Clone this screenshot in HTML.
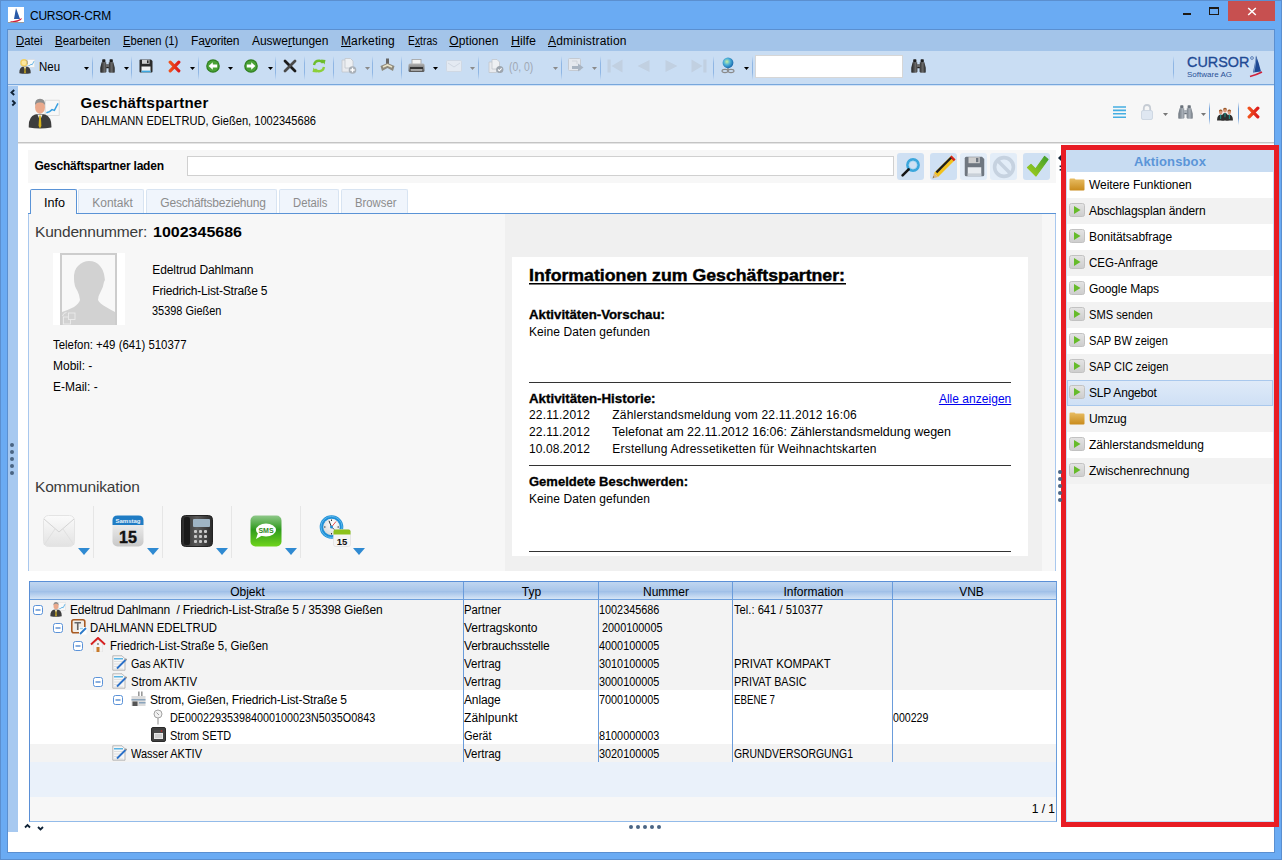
<!DOCTYPE html>
<html><head><meta charset="utf-8"><style>
html,body{margin:0;padding:0;width:1282px;height:860px;overflow:hidden;background:#6aabf3;}
.a{position:absolute;}
.t{white-space:pre;}
u{text-decoration:underline;text-underline-offset:1px}
</style></head><body>
<div class="a" style="left:0px;top:0px;width:1282px;height:860px;background:#6aabf3;box-shadow:inset 0 0 0 1px #5b8fcf;"></div>
<svg class="a" style="left:8px;top:7px" width="16" height="16" viewBox="0 0 16 16"><rect x="0" y="0" width="16" height="16" fill="#fff"/><path d="M8 1 L12 12 L6 12 Z" fill="#2a5aa8"/><path d="M2 14 Q8 15 14 11 L13 13 Q8 16 3 15Z" fill="#d0203a"/><rect x="0" y="15" width="16" height="1" fill="#9a9a9a"/></svg>
<div class="a t" style="left:30.00px;top:8.84px;line-height:14px;font-family:'Liberation Sans';font-size:12px;font-weight:normal;white-space:pre;letter-spacing:-0.233px;color:#000;">CURSOR-CRM</div>
<div class="a" style="left:1183px;top:13px;width:8px;height:2px;background:#1e1a16"></div>
<div class="a" style="left:1209px;top:7px;width:10px;height:8px;border:1px solid #1e1a16;border-top-width:2px;box-sizing:border-box"></div>
<div class="a" style="left:1228px;top:1px;width:47px;height:20px;background:#c75050"></div>
<svg class="a" style="left:1247px;top:7px" width="10" height="9" viewBox="0 0 10 9"><path d="M1.2 1 L8.8 8 M8.8 1 L1.2 8" stroke="#fff" stroke-width="1.5"/></svg>
<div class="a" style="left:7px;top:29px;width:1268px;height:824px;background:#fff;border:1px solid #5a8fd0;box-sizing:border-box"></div>
<div class="a" style="left:8px;top:30px;width:1266px;height:21px;background:#a3c4e9"></div>
<div class="a t" style="left:16.00px;top:33.84px;line-height:14px;font-family:'Liberation Sans';font-size:12px;font-weight:normal;white-space:pre;letter-spacing:0.000px;color:#000;transform:scaleX(0.9459);transform-origin:0 0;"><u>D</u>atei</div>
<div class="a t" style="left:55.00px;top:33.84px;line-height:14px;font-family:'Liberation Sans';font-size:12px;font-weight:normal;white-space:pre;letter-spacing:0.000px;color:#000;transform:scaleX(0.9527);transform-origin:0 0;"><u>B</u>earbeiten</div>
<div class="a t" style="left:123.00px;top:33.84px;line-height:14px;font-family:'Liberation Sans';font-size:12px;font-weight:normal;white-space:pre;letter-spacing:0.000px;color:#000;transform:scaleX(0.9314);transform-origin:0 0;"><u>E</u>benen (1)</div>
<div class="a t" style="left:191.00px;top:33.84px;line-height:14px;font-family:'Liberation Sans';font-size:12px;font-weight:normal;white-space:pre;letter-spacing:-0.192px;color:#000;">Fa<u>v</u>oriten</div>
<div class="a t" style="left:252.00px;top:33.84px;line-height:14px;font-family:'Liberation Sans';font-size:12px;font-weight:normal;white-space:pre;letter-spacing:-0.027px;color:#000;">Auswe<u>r</u>tungen</div>
<div class="a t" style="left:341.00px;top:33.84px;line-height:14px;font-family:'Liberation Sans';font-size:12px;font-weight:normal;white-space:pre;letter-spacing:0.113px;color:#000;"><u>M</u>arketing</div>
<div class="a t" style="left:407.50px;top:33.84px;line-height:14px;font-family:'Liberation Sans';font-size:12px;font-weight:normal;white-space:pre;letter-spacing:0.000px;color:#000;transform:scaleX(0.8614);transform-origin:0 0;">E<u>x</u>tras</div>
<div class="a t" style="left:449.30px;top:33.84px;line-height:14px;font-family:'Liberation Sans';font-size:12px;font-weight:normal;white-space:pre;letter-spacing:0.075px;color:#000;"><u>O</u>ptionen</div>
<div class="a t" style="left:511.00px;top:33.84px;line-height:14px;font-family:'Liberation Sans';font-size:12px;font-weight:normal;white-space:pre;letter-spacing:0.000px;color:#000;transform:scaleX(1.0410);transform-origin:0 0;"><u>H</u>ilfe</div>
<div class="a t" style="left:548.00px;top:33.84px;line-height:14px;font-family:'Liberation Sans';font-size:12px;font-weight:normal;white-space:pre;letter-spacing:0.183px;color:#000;"><u>A</u>dministration</div>
<div class="a" style="left:8px;top:51px;width:1266px;height:33px;background:#c9ddf3"></div>
<div class="a" style="left:8px;top:84px;width:1266px;height:1px;background:#78a7dc"></div>
<div class="a" style="left:8px;top:85px;width:1266px;height:1px;background:#d2e3f6"></div>
<div class="a" style="left:92px;top:56px;width:1px;height:24px;background:linear-gradient(#c9ddf3,#8fb6e4 30%,#8fb6e4 70%,#c9ddf3)"></div>
<div class="a" style="left:131px;top:56px;width:1px;height:24px;background:linear-gradient(#c9ddf3,#8fb6e4 30%,#8fb6e4 70%,#c9ddf3)"></div>
<div class="a" style="left:198px;top:56px;width:1px;height:24px;background:linear-gradient(#c9ddf3,#8fb6e4 30%,#8fb6e4 70%,#c9ddf3)"></div>
<div class="a" style="left:275px;top:56px;width:1px;height:24px;background:linear-gradient(#c9ddf3,#8fb6e4 30%,#8fb6e4 70%,#c9ddf3)"></div>
<div class="a" style="left:304px;top:56px;width:1px;height:24px;background:linear-gradient(#c9ddf3,#8fb6e4 30%,#8fb6e4 70%,#c9ddf3)"></div>
<div class="a" style="left:333px;top:56px;width:1px;height:24px;background:linear-gradient(#c9ddf3,#8fb6e4 30%,#8fb6e4 70%,#c9ddf3)"></div>
<div class="a" style="left:372px;top:56px;width:1px;height:24px;background:linear-gradient(#c9ddf3,#8fb6e4 30%,#8fb6e4 70%,#c9ddf3)"></div>
<div class="a" style="left:401px;top:56px;width:1px;height:24px;background:linear-gradient(#c9ddf3,#8fb6e4 30%,#8fb6e4 70%,#c9ddf3)"></div>
<div class="a" style="left:478px;top:56px;width:1px;height:24px;background:linear-gradient(#c9ddf3,#8fb6e4 30%,#8fb6e4 70%,#c9ddf3)"></div>
<div class="a" style="left:561px;top:56px;width:1px;height:24px;background:linear-gradient(#c9ddf3,#8fb6e4 30%,#8fb6e4 70%,#c9ddf3)"></div>
<div class="a" style="left:600px;top:56px;width:1px;height:24px;background:linear-gradient(#c9ddf3,#8fb6e4 30%,#8fb6e4 70%,#c9ddf3)"></div>
<div class="a" style="left:713px;top:56px;width:1px;height:24px;background:linear-gradient(#c9ddf3,#8fb6e4 30%,#8fb6e4 70%,#c9ddf3)"></div>
<div class="a" style="left:752px;top:56px;width:1px;height:24px;background:linear-gradient(#c9ddf3,#8fb6e4 30%,#8fb6e4 70%,#c9ddf3)"></div>
<div class="a" style="left:1173px;top:56px;width:1px;height:24px;background:linear-gradient(#c9ddf3,#8fb6e4 30%,#8fb6e4 70%,#c9ddf3)"></div>
<svg class="a" style="left:84px;top:67px" width="5" height="3" viewBox="0 0 5 3"><path d="M0 0 H5 L2.5 3Z" fill="#000"/></svg>
<svg class="a" style="left:124px;top:67px" width="5" height="3" viewBox="0 0 5 3"><path d="M0 0 H5 L2.5 3Z" fill="#000"/></svg>
<svg class="a" style="left:190px;top:67px" width="5" height="3" viewBox="0 0 5 3"><path d="M0 0 H5 L2.5 3Z" fill="#000"/></svg>
<svg class="a" style="left:228px;top:67px" width="5" height="3" viewBox="0 0 5 3"><path d="M0 0 H5 L2.5 3Z" fill="#000"/></svg>
<svg class="a" style="left:268px;top:67px" width="5" height="3" viewBox="0 0 5 3"><path d="M0 0 H5 L2.5 3Z" fill="#000"/></svg>
<svg class="a" style="left:433px;top:67px" width="5" height="3" viewBox="0 0 5 3"><path d="M0 0 H5 L2.5 3Z" fill="#000"/></svg>
<svg class="a" style="left:744px;top:67px" width="5" height="3" viewBox="0 0 5 3"><path d="M0 0 H5 L2.5 3Z" fill="#000"/></svg>
<svg class="a" style="left:365px;top:67px" width="5" height="3" viewBox="0 0 5 3"><path d="M0 0 H5 L2.5 3Z" fill="#8a8a8a"/></svg>
<svg class="a" style="left:470px;top:67px" width="5" height="3" viewBox="0 0 5 3"><path d="M0 0 H5 L2.5 3Z" fill="#8a8a8a"/></svg>
<svg class="a" style="left:553px;top:67px" width="5" height="3" viewBox="0 0 5 3"><path d="M0 0 H5 L2.5 3Z" fill="#8a8a8a"/></svg>
<svg class="a" style="left:592px;top:67px" width="5" height="3" viewBox="0 0 5 3"><path d="M0 0 H5 L2.5 3Z" fill="#8a8a8a"/></svg>
<div class="a t" style="left:39.00px;top:59.84px;line-height:14px;font-family:'Liberation Sans';font-size:12px;font-weight:normal;white-space:pre;letter-spacing:0.000px;color:#000;transform:scaleX(0.9539);transform-origin:0 0;">Neu</div>
<div class="a t" style="left:508.70px;top:59.84px;line-height:14px;font-family:'Liberation Sans';font-size:12px;font-weight:normal;white-space:pre;letter-spacing:0.000px;color:#a0a8b4;transform:scaleX(0.8674);transform-origin:0 0;">(0, 0)</div>
<div class="a" style="left:755px;top:55px;width:148px;height:23px;background:#fff;border:1px solid #d6d6d6;box-sizing:border-box"></div>
<div class="a t" style="left:1186.80px;top:52.63px;line-height:18px;font-family:'Liberation Sans';font-size:15.5px;font-weight:normal;white-space:pre;letter-spacing:0.000px;color:#1f4a94;transform:scaleX(0.9290);transform-origin:0 0;-webkit-text-stroke:0.35px #1f4a94;">CURSOR</div>
<div class="a t" style="left:1187.00px;top:69.73px;line-height:9px;font-family:'Liberation Sans';font-size:8px;font-weight:normal;white-space:pre;letter-spacing:0.007px;color:#2a5298;">Software AG</div>
<svg class="a" style="left:1250px;top:56px" width="4" height="4" viewBox="0 0 4 4"><circle cx="2" cy="2" r="1.4" fill="none" stroke="#1f4a94" stroke-width="0.6"/></svg>
<svg class="a" style="left:1249px;top:55px" width="14" height="23" viewBox="0 0 14 23"><path d="M7 0.5 Q10 8 12 16.5 L4 17.5 Q6 9 7 0.5Z" fill="#1f4a94"/><path d="M7 3 Q6.5 10 5 17" stroke="#c8dcf2" stroke-width="0.5" fill="none"/><path d="M1 21.5 Q7 20 13 17" stroke="#d0203a" stroke-width="1.6" fill="none"/></svg>
<div class="a" style="left:8px;top:86px;width:10px;height:746px;background:#a7c9f0"></div>
<div class="a" style="left:18px;top:86px;width:1256px;height:56px;background:#f7f7f7"></div>
<div class="a" style="left:18px;top:142px;width:1256px;height:1px;background:#c4c4c4"></div>
<div class="a" style="left:18px;top:143px;width:1256px;height:1px;background:#e4e4e4"></div>
<div class="a t" style="left:80.50px;top:94.30px;line-height:17px;font-family:'Liberation Sans';font-size:15px;font-weight:bold;white-space:pre;letter-spacing:0.236px;color:#000;">Geschäftspartner</div>
<div class="a t" style="left:80.50px;top:113.84px;line-height:14px;font-family:'Liberation Sans';font-size:12px;font-weight:normal;white-space:pre;letter-spacing:0.000px;color:#000;transform:scaleX(0.9256);transform-origin:0 0;">DAHLMANN EDELTRUD, Gießen, 1002345686</div>
<div class="a" style="left:28px;top:150px;width:1028px;height:33px;background:#f7f7f7"></div>
<div class="a t" style="left:34.40px;top:158.84px;line-height:14px;font-family:'Liberation Sans';font-size:12px;font-weight:bold;white-space:pre;letter-spacing:-0.211px;color:#000;">Geschäftspartner laden</div>
<div class="a" style="left:187px;top:156px;width:707px;height:20px;background:#fff;border:1px solid #d0d0d0;box-sizing:border-box"></div>
<div class="a" style="left:897px;top:153px;width:27px;height:27px;background:#cfe0f3;border-radius:3px"></div>
<div class="a" style="left:930px;top:153px;width:27px;height:27px;background:#cfe0f3;border-radius:3px"></div>
<div class="a" style="left:960px;top:153px;width:27px;height:27px;background:#e3edf8;border-radius:3px"></div>
<div class="a" style="left:990px;top:153px;width:27px;height:27px;background:#e3edf8;border-radius:3px"></div>
<div class="a" style="left:1023px;top:153px;width:27px;height:27px;background:#cfe0f3;border-radius:3px"></div>
<div class="a" style="left:28px;top:213px;width:1028px;height:1px;background:#5a93d6"></div>
<div class="a" style="left:78px;top:189px;width:66px;height:24px;background:#f0f5fc;border:1px solid #d8e4f2;border-bottom:none;box-sizing:border-box;border-radius:2px 2px 0 0"></div>
<div class="a t" style="left:92.30px;top:195.84px;line-height:14px;font-family:'Liberation Sans';font-size:12px;font-weight:normal;white-space:pre;letter-spacing:-0.043px;color:#8c8c8c;">Kontakt</div>
<div class="a" style="left:146px;top:189px;width:131px;height:24px;background:#f0f5fc;border:1px solid #d8e4f2;border-bottom:none;box-sizing:border-box;border-radius:2px 2px 0 0"></div>
<div class="a t" style="left:160.35px;top:195.84px;line-height:14px;font-family:'Liberation Sans';font-size:12px;font-weight:normal;white-space:pre;letter-spacing:-0.228px;color:#8c8c8c;">Geschäftsbeziehung</div>
<div class="a" style="left:279px;top:189px;width:60px;height:24px;background:#f0f5fc;border:1px solid #d8e4f2;border-bottom:none;box-sizing:border-box;border-radius:2px 2px 0 0"></div>
<div class="a t" style="left:293.35px;top:195.84px;line-height:14px;font-family:'Liberation Sans';font-size:12px;font-weight:normal;white-space:pre;letter-spacing:0.000px;color:#8c8c8c;transform:scaleX(0.9404);transform-origin:0 0;">Details</div>
<div class="a" style="left:341px;top:189px;width:67px;height:24px;background:#f0f5fc;border:1px solid #d8e4f2;border-bottom:none;box-sizing:border-box;border-radius:2px 2px 0 0"></div>
<div class="a t" style="left:355.35px;top:195.84px;line-height:14px;font-family:'Liberation Sans';font-size:12px;font-weight:normal;white-space:pre;letter-spacing:0.000px;color:#8c8c8c;transform:scaleX(0.9428);transform-origin:0 0;">Browser</div>
<div class="a" style="left:30px;top:189px;width:47px;height:26px;background:#f7f7f7;border:1px solid #5a93d6;border-bottom:none;box-sizing:border-box;border-radius:2px 2px 0 0"></div>
<div class="a t" style="left:43.50px;top:195.84px;line-height:14px;font-family:'Liberation Sans';font-size:12px;font-weight:normal;white-space:pre;letter-spacing:0.000px;color:#000;transform:scaleX(1.0492);transform-origin:0 0;">Info</div>
<div class="a" style="left:28px;top:214px;width:1028px;height:357px;background:#f7f7f7"></div>
<div class="a" style="left:28px;top:214px;width:1px;height:357px;background:#a9c8ee"></div>
<div class="a" style="left:1055px;top:214px;width:1px;height:357px;background:#a9c8ee"></div>
<div class="a" style="left:505px;top:214px;width:537px;height:357px;background:#f0f0f0"></div>
<div class="a" style="left:512px;top:257px;width:516px;height:299px;background:#fff"></div>
<div class="a t" style="left:35.00px;top:222.63px;line-height:18px;font-family:'Liberation Sans';font-size:15.5px;font-weight:normal;white-space:pre;letter-spacing:-0.200px;color:#3a3a3a;">Kundennummer:</div>
<div class="a t" style="left:153.00px;top:223.30px;line-height:17px;font-family:'Liberation Sans';font-size:15px;font-weight:bold;white-space:pre;letter-spacing:0.000px;color:#000;transform:scaleX(1.0667);transform-origin:0 0;">1002345686</div>
<div class="a t" style="left:152.30px;top:262.84px;line-height:14px;font-family:'Liberation Sans';font-size:12px;font-weight:normal;white-space:pre;letter-spacing:-0.102px;color:#000;">Edeltrud Dahlmann</div>
<div class="a t" style="left:152.30px;top:283.84px;line-height:14px;font-family:'Liberation Sans';font-size:12px;font-weight:normal;white-space:pre;letter-spacing:-0.190px;color:#000;">Friedrich-List-Straße 5</div>
<div class="a t" style="left:152.30px;top:303.84px;line-height:14px;font-family:'Liberation Sans';font-size:12px;font-weight:normal;white-space:pre;letter-spacing:0.000px;color:#000;transform:scaleX(0.9124);transform-origin:0 0;">35398 Gießen</div>
<div class="a t" style="left:53.00px;top:337.84px;line-height:14px;font-family:'Liberation Sans';font-size:12px;font-weight:normal;white-space:pre;letter-spacing:0.000px;color:#000;transform:scaleX(0.9505);transform-origin:0 0;">Telefon: +49 (641) 510377</div>
<div class="a t" style="left:53.00px;top:358.84px;line-height:14px;font-family:'Liberation Sans';font-size:12px;font-weight:normal;white-space:pre;letter-spacing:0.000px;color:#000;">Mobil: -</div>
<div class="a t" style="left:53.00px;top:379.84px;line-height:14px;font-family:'Liberation Sans';font-size:12px;font-weight:normal;white-space:pre;letter-spacing:0.000px;color:#000;">E-Mail: -</div>
<div class="a t" style="left:35.00px;top:477.63px;line-height:18px;font-family:'Liberation Sans';font-size:15.5px;font-weight:normal;white-space:pre;letter-spacing:-0.171px;color:#3a3a3a;">Kommunikation</div>
<div class="a" style="left:53px;top:253px;width:72px;height:72px;background:#fff"></div>
<div class="a t" style="left:529.30px;top:266.11px;line-height:20px;font-family:'Liberation Sans';font-size:17px;font-weight:bold;white-space:pre;letter-spacing:0.000px;color:#000;transform:scaleX(1.0422);transform-origin:0 0;-webkit-text-stroke:0.45px #000;">Informationen zum Geschäftspartner:</div>
<div class="a" style="left:529px;top:283px;width:317px;height:1px;background:#000"></div>
<div class="a" style="left:529px;top:284px;width:317px;height:1px;background:#777"></div>
<div class="a t" style="left:529.00px;top:307.84px;line-height:14px;font-family:'Liberation Sans';font-size:12px;font-weight:bold;white-space:pre;letter-spacing:0.000px;color:#000;transform:scaleX(1.1044);transform-origin:0 0;-webkit-text-stroke:0.3px #000;">Aktivitäten-Vorschau:</div>
<div class="a t" style="left:529.00px;top:324.84px;line-height:14px;font-family:'Liberation Sans';font-size:12px;font-weight:normal;white-space:pre;letter-spacing:0.078px;color:#000;">Keine Daten gefunden</div>
<div class="a" style="left:529px;top:382px;width:482px;height:1px;background:#333"></div>
<div class="a t" style="left:529.00px;top:391.84px;line-height:14px;font-family:'Liberation Sans';font-size:12px;font-weight:bold;white-space:pre;letter-spacing:0.000px;color:#000;transform:scaleX(1.1093);transform-origin:0 0;-webkit-text-stroke:0.3px #000;">Aktivitäten-Historie:</div>
<div class="a t" style="left:938.90px;top:391.84px;line-height:14px;font-family:'Liberation Sans';font-size:12px;font-weight:normal;white-space:pre;letter-spacing:0.026px;color:#0000ee;text-decoration:underline;">Alle anzeigen</div>
<div class="a t" style="left:529.00px;top:407.84px;line-height:14px;font-family:'Liberation Sans';font-size:12px;font-weight:normal;white-space:pre;letter-spacing:0.183px;color:#000;">22.11.2012</div>
<div class="a t" style="left:612.30px;top:407.84px;line-height:14px;font-family:'Liberation Sans';font-size:12px;font-weight:normal;white-space:pre;letter-spacing:0.185px;color:#000;">Zählerstandsmeldung vom 22.11.2012 16:06</div>
<div class="a t" style="left:529.00px;top:424.84px;line-height:14px;font-family:'Liberation Sans';font-size:12px;font-weight:normal;white-space:pre;letter-spacing:0.183px;color:#000;">22.11.2012</div>
<div class="a t" style="left:612.30px;top:424.84px;line-height:14px;font-family:'Liberation Sans';font-size:12px;font-weight:normal;white-space:pre;letter-spacing:0.000px;color:#000;transform:scaleX(1.0420);transform-origin:0 0;">Telefonat am 22.11.2012 16:06: Zählerstandsmeldung wegen</div>
<div class="a t" style="left:529.00px;top:441.84px;line-height:14px;font-family:'Liberation Sans';font-size:12px;font-weight:normal;white-space:pre;letter-spacing:0.094px;color:#000;">10.08.2012</div>
<div class="a t" style="left:612.30px;top:441.84px;line-height:14px;font-family:'Liberation Sans';font-size:12px;font-weight:normal;white-space:pre;letter-spacing:0.193px;color:#000;">Erstellung Adressetiketten für Weihnachtskarten</div>
<div class="a" style="left:529px;top:465px;width:482px;height:1px;background:#333"></div>
<div class="a t" style="left:529.00px;top:474.84px;line-height:14px;font-family:'Liberation Sans';font-size:12px;font-weight:bold;white-space:pre;letter-spacing:0.000px;color:#000;transform:scaleX(1.0837);transform-origin:0 0;-webkit-text-stroke:0.3px #000;">Gemeldete Beschwerden:</div>
<div class="a t" style="left:529.00px;top:491.84px;line-height:14px;font-family:'Liberation Sans';font-size:12px;font-weight:normal;white-space:pre;letter-spacing:0.078px;color:#000;">Keine Daten gefunden</div>
<div class="a" style="left:529px;top:551px;width:482px;height:1px;background:#333"></div>
<div class="a" style="left:29px;top:581px;width:1028px;height:241px;background:#f7f7f7;border:1px solid #5a8fd6;border-right-color:#6a9edd;border-bottom-color:#93bbe9;box-sizing:border-box"></div>
<div class="a" style="left:30px;top:582px;width:1026px;height:17px;background:linear-gradient(#c0d6f0,#a9c6ea 50%,#a0c0e8 56%,#d6e5f6)"></div>
<div class="a" style="left:30px;top:599px;width:1026px;height:1px;background:#6d9fdc"></div>
<div class="a" style="left:30px;top:600px;width:1026px;height:18px;background:#f3f3f3"></div>
<div class="a" style="left:30px;top:618px;width:1026px;height:18px;background:#f3f3f3"></div>
<div class="a" style="left:30px;top:636px;width:1026px;height:18px;background:#f3f3f3"></div>
<div class="a" style="left:30px;top:654px;width:1026px;height:18px;background:#f3f3f3"></div>
<div class="a" style="left:30px;top:672px;width:1026px;height:18px;background:#f3f3f3"></div>
<div class="a" style="left:30px;top:690px;width:1026px;height:18px;background:#fff"></div>
<div class="a" style="left:30px;top:708px;width:1026px;height:18px;background:#fff"></div>
<div class="a" style="left:30px;top:726px;width:1026px;height:18px;background:#fff"></div>
<div class="a" style="left:30px;top:744px;width:1026px;height:18px;background:#f3f3f3"></div>
<div class="a" style="left:30px;top:762px;width:1026px;height:35px;background:#eaf1fa"></div>
<div class="a" style="left:463px;top:582px;width:1px;height:180px;background:#6a9cdb"></div>
<div class="a" style="left:598px;top:582px;width:1px;height:180px;background:#6a9cdb"></div>
<div class="a" style="left:732px;top:582px;width:1px;height:180px;background:#6a9cdb"></div>
<div class="a" style="left:892px;top:582px;width:1px;height:180px;background:#6a9cdb"></div>
<div class="a t" style="left:230.16px;top:584.84px;line-height:14px;font-family:'Liberation Sans';font-size:12px;font-weight:normal;white-space:pre;letter-spacing:0.000px;color:#000;">Objekt</div>
<div class="a t" style="left:521.83px;top:584.84px;line-height:14px;font-family:'Liberation Sans';font-size:12px;font-weight:normal;white-space:pre;letter-spacing:0.000px;color:#000;">Typ</div>
<div class="a t" style="left:642.99px;top:584.84px;line-height:14px;font-family:'Liberation Sans';font-size:12px;font-weight:normal;white-space:pre;letter-spacing:0.000px;color:#000;">Nummer</div>
<div class="a t" style="left:783.48px;top:584.84px;line-height:14px;font-family:'Liberation Sans';font-size:12px;font-weight:normal;white-space:pre;letter-spacing:0.000px;color:#000;">Information</div>
<div class="a t" style="left:959.16px;top:584.84px;line-height:14px;font-family:'Liberation Sans';font-size:12px;font-weight:normal;white-space:pre;letter-spacing:0.000px;color:#000;">VNB</div>
<div class="a t" style="left:70.00px;top:602.84px;line-height:14px;font-family:'Liberation Sans';font-size:12px;font-weight:normal;white-space:pre;letter-spacing:-0.152px;color:#000;">Edeltrud Dahlmann  / Friedrich-List-Straße 5 / 35398 Gießen</div>
<div class="a t" style="left:464.00px;top:602.84px;line-height:14px;font-family:'Liberation Sans';font-size:12px;font-weight:normal;white-space:pre;letter-spacing:0.000px;color:#000;transform:scaleX(0.9401);transform-origin:0 0;">Partner</div>
<div class="a t" style="left:598.50px;top:602.84px;line-height:14px;font-family:'Liberation Sans';font-size:12px;font-weight:normal;white-space:pre;letter-spacing:0.000px;color:#000;transform:scaleX(0.9049);transform-origin:0 0;">1002345686</div>
<div class="a t" style="left:733.90px;top:602.84px;line-height:14px;font-family:'Liberation Sans';font-size:12px;font-weight:normal;white-space:pre;letter-spacing:0.000px;color:#000;transform:scaleX(0.9327);transform-origin:0 0;">Tel.: 641 / 510377</div>
<div class="a t" style="left:90.00px;top:620.84px;line-height:14px;font-family:'Liberation Sans';font-size:12px;font-weight:normal;white-space:pre;letter-spacing:0.000px;color:#000;transform:scaleX(0.9445);transform-origin:0 0;">DAHLMANN EDELTRUD</div>
<div class="a t" style="left:464.00px;top:620.84px;line-height:14px;font-family:'Liberation Sans';font-size:12px;font-weight:normal;white-space:pre;letter-spacing:-0.042px;color:#000;">Vertragskonto</div>
<div class="a t" style="left:598.50px;top:620.84px;line-height:14px;font-family:'Liberation Sans';font-size:12px;font-weight:normal;white-space:pre;letter-spacing:0.000px;color:#000;transform:scaleX(0.9061);transform-origin:0 0;"> 2000100005</div>
<div class="a t" style="left:110.30px;top:638.84px;line-height:14px;font-family:'Liberation Sans';font-size:12px;font-weight:normal;white-space:pre;letter-spacing:0.000px;color:#000;transform:scaleX(0.9565);transform-origin:0 0;">Friedrich-List-Straße 5, Gießen</div>
<div class="a t" style="left:464.00px;top:638.84px;line-height:14px;font-family:'Liberation Sans';font-size:12px;font-weight:normal;white-space:pre;letter-spacing:-0.201px;color:#000;">Verbrauchsstelle</div>
<div class="a t" style="left:598.50px;top:638.84px;line-height:14px;font-family:'Liberation Sans';font-size:12px;font-weight:normal;white-space:pre;letter-spacing:0.000px;color:#000;transform:scaleX(0.9049);transform-origin:0 0;">4000100005</div>
<div class="a t" style="left:130.60px;top:656.84px;line-height:14px;font-family:'Liberation Sans';font-size:12px;font-weight:normal;white-space:pre;letter-spacing:0.000px;color:#000;transform:scaleX(0.8946);transform-origin:0 0;">Gas AKTIV</div>
<div class="a t" style="left:464.00px;top:656.84px;line-height:14px;font-family:'Liberation Sans';font-size:12px;font-weight:normal;white-space:pre;letter-spacing:0.000px;color:#000;transform:scaleX(0.9560);transform-origin:0 0;">Vertrag</div>
<div class="a t" style="left:598.50px;top:656.84px;line-height:14px;font-family:'Liberation Sans';font-size:12px;font-weight:normal;white-space:pre;letter-spacing:0.000px;color:#000;transform:scaleX(0.9049);transform-origin:0 0;">3010100005</div>
<div class="a t" style="left:733.90px;top:656.84px;line-height:14px;font-family:'Liberation Sans';font-size:12px;font-weight:normal;white-space:pre;letter-spacing:0.000px;color:#000;transform:scaleX(0.9437);transform-origin:0 0;">PRIVAT KOMPAKT</div>
<div class="a t" style="left:130.60px;top:674.84px;line-height:14px;font-family:'Liberation Sans';font-size:12px;font-weight:normal;white-space:pre;letter-spacing:0.000px;color:#000;transform:scaleX(0.9530);transform-origin:0 0;">Strom AKTIV</div>
<div class="a t" style="left:464.00px;top:674.84px;line-height:14px;font-family:'Liberation Sans';font-size:12px;font-weight:normal;white-space:pre;letter-spacing:0.000px;color:#000;transform:scaleX(0.9560);transform-origin:0 0;">Vertrag</div>
<div class="a t" style="left:598.50px;top:674.84px;line-height:14px;font-family:'Liberation Sans';font-size:12px;font-weight:normal;white-space:pre;letter-spacing:0.000px;color:#000;transform:scaleX(0.9049);transform-origin:0 0;">3000100005</div>
<div class="a t" style="left:733.90px;top:674.84px;line-height:14px;font-family:'Liberation Sans';font-size:12px;font-weight:normal;white-space:pre;letter-spacing:0.000px;color:#000;transform:scaleX(0.8984);transform-origin:0 0;">PRIVAT BASIC</div>
<div class="a t" style="left:150.00px;top:692.84px;line-height:14px;font-family:'Liberation Sans';font-size:12px;font-weight:normal;white-space:pre;letter-spacing:-0.191px;color:#000;">Strom, Gießen, Friedrich-List-Straße 5</div>
<div class="a t" style="left:464.00px;top:692.84px;line-height:14px;font-family:'Liberation Sans';font-size:12px;font-weight:normal;white-space:pre;letter-spacing:-0.146px;color:#000;">Anlage</div>
<div class="a t" style="left:598.50px;top:692.84px;line-height:14px;font-family:'Liberation Sans';font-size:12px;font-weight:normal;white-space:pre;letter-spacing:0.000px;color:#000;transform:scaleX(0.9049);transform-origin:0 0;">7000100005</div>
<div class="a t" style="left:733.90px;top:692.84px;line-height:14px;font-family:'Liberation Sans';font-size:12px;font-weight:normal;white-space:pre;letter-spacing:0.000px;color:#000;transform:scaleX(0.8086);transform-origin:0 0;">EBENE 7</div>
<div class="a t" style="left:170.40px;top:710.84px;line-height:14px;font-family:'Liberation Sans';font-size:12px;font-weight:normal;white-space:pre;letter-spacing:0.000px;color:#000;transform:scaleX(0.8991);transform-origin:0 0;">DE000229353984000100023N5035O0843</div>
<div class="a t" style="left:464.00px;top:710.84px;line-height:14px;font-family:'Liberation Sans';font-size:12px;font-weight:normal;white-space:pre;letter-spacing:0.111px;color:#000;">Zählpunkt</div>
<div class="a t" style="left:893.40px;top:710.84px;line-height:14px;font-family:'Liberation Sans';font-size:12px;font-weight:normal;white-space:pre;letter-spacing:0.000px;color:#000;transform:scaleX(0.8815);transform-origin:0 0;">000229</div>
<div class="a t" style="left:170.40px;top:728.84px;line-height:14px;font-family:'Liberation Sans';font-size:12px;font-weight:normal;white-space:pre;letter-spacing:0.000px;color:#000;transform:scaleX(0.9088);transform-origin:0 0;">Strom SETD</div>
<div class="a t" style="left:464.00px;top:728.84px;line-height:14px;font-family:'Liberation Sans';font-size:12px;font-weight:normal;white-space:pre;letter-spacing:0.000px;color:#000;transform:scaleX(0.9162);transform-origin:0 0;">Gerät</div>
<div class="a t" style="left:598.50px;top:728.84px;line-height:14px;font-family:'Liberation Sans';font-size:12px;font-weight:normal;white-space:pre;letter-spacing:0.000px;color:#000;transform:scaleX(0.9049);transform-origin:0 0;">8100000003</div>
<div class="a t" style="left:130.60px;top:746.84px;line-height:14px;font-family:'Liberation Sans';font-size:12px;font-weight:normal;white-space:pre;letter-spacing:0.000px;color:#000;transform:scaleX(0.9152);transform-origin:0 0;">Wasser AKTIV</div>
<div class="a t" style="left:464.00px;top:746.84px;line-height:14px;font-family:'Liberation Sans';font-size:12px;font-weight:normal;white-space:pre;letter-spacing:0.000px;color:#000;transform:scaleX(0.9560);transform-origin:0 0;">Vertrag</div>
<div class="a t" style="left:598.50px;top:746.84px;line-height:14px;font-family:'Liberation Sans';font-size:12px;font-weight:normal;white-space:pre;letter-spacing:0.000px;color:#000;transform:scaleX(0.9049);transform-origin:0 0;">3020100005</div>
<div class="a t" style="left:733.90px;top:746.84px;line-height:14px;font-family:'Liberation Sans';font-size:12px;font-weight:normal;white-space:pre;letter-spacing:0.000px;color:#000;transform:scaleX(0.8663);transform-origin:0 0;">GRUNDVERSORGUNG1</div>
<div class="a t" style="left:1031.64px;top:801.84px;line-height:14px;font-family:'Liberation Sans';font-size:12px;font-weight:normal;white-space:pre;letter-spacing:0.000px;color:#000;">1 / 1</div>
<div class="a" style="left:1061px;top:145px;width:218px;height:682px;background:#e81c24"></div>
<div class="a" style="left:1066px;top:150px;width:208px;height:672px;background:#f7f7f7;box-shadow:inset 0 0 0 1px #c6def5"></div>
<div class="a" style="left:1067px;top:150px;width:206px;height:22px;background:#c8dcf2"></div>
<div class="a t" style="left:1134.00px;top:154.00px;line-height:15px;font-family:'Liberation Sans';font-size:13px;font-weight:bold;white-space:pre;letter-spacing:0.120px;color:#5b95d8;">Aktionsbox</div>
<div class="a" style="left:1067px;top:172px;width:206px;height:26px;background:#fff"></div>
<svg class="a" style="left:1069px;top:178px" width="16" height="13" viewBox="0 0 16 13"><defs><linearGradient id="fg" x1="0" y1="0" x2="0" y2="1"><stop offset="0" stop-color="#e8bd63"/><stop offset="1" stop-color="#c98b1c"/></linearGradient></defs><path d="M0.5 1.5 Q0.5 0.5 1.5 0.5 H5.5 L6.5 1.5 H14.5 Q15.5 1.5 15.5 2.5 V11.5 Q15.5 12.5 14.5 12.5 H1.5 Q0.5 12.5 0.5 11.5Z" fill="url(#fg)"/></svg>
<div class="a t" style="left:1089.00px;top:177.84px;line-height:14px;font-family:'Liberation Sans';font-size:12px;font-weight:normal;white-space:pre;letter-spacing:-0.069px;color:#000;">Weitere Funktionen</div>
<div class="a" style="left:1067px;top:198px;width:206px;height:26px;background:#f2f2f2"></div>
<svg class="a" style="left:1069px;top:203px" width="16" height="14" viewBox="0 0 16 14"><defs><linearGradient id="pg" x1="0" y1="0" x2="0" y2="1"><stop offset="0" stop-color="#e4e4e4"/><stop offset="1" stop-color="#cdcdcd"/></linearGradient></defs><rect x="0.5" y="0.5" width="15" height="13" rx="2" fill="url(#pg)" stroke="#c2c2c2"/><path d="M5 3 L11.5 7 L5 11Z" fill="#66bb2a"/></svg>
<div class="a t" style="left:1089.00px;top:203.84px;line-height:14px;font-family:'Liberation Sans';font-size:12px;font-weight:normal;white-space:pre;letter-spacing:-0.113px;color:#000;">Abschlagsplan ändern</div>
<div class="a" style="left:1067px;top:224px;width:206px;height:26px;background:#fff"></div>
<svg class="a" style="left:1069px;top:229px" width="16" height="14" viewBox="0 0 16 14"><defs><linearGradient id="pg" x1="0" y1="0" x2="0" y2="1"><stop offset="0" stop-color="#e4e4e4"/><stop offset="1" stop-color="#cdcdcd"/></linearGradient></defs><rect x="0.5" y="0.5" width="15" height="13" rx="2" fill="url(#pg)" stroke="#c2c2c2"/><path d="M5 3 L11.5 7 L5 11Z" fill="#66bb2a"/></svg>
<div class="a t" style="left:1089.00px;top:229.84px;line-height:14px;font-family:'Liberation Sans';font-size:12px;font-weight:normal;white-space:pre;letter-spacing:-0.071px;color:#000;">Bonitätsabfrage</div>
<div class="a" style="left:1067px;top:250px;width:206px;height:26px;background:#f2f2f2"></div>
<svg class="a" style="left:1069px;top:255px" width="16" height="14" viewBox="0 0 16 14"><defs><linearGradient id="pg" x1="0" y1="0" x2="0" y2="1"><stop offset="0" stop-color="#e4e4e4"/><stop offset="1" stop-color="#cdcdcd"/></linearGradient></defs><rect x="0.5" y="0.5" width="15" height="13" rx="2" fill="url(#pg)" stroke="#c2c2c2"/><path d="M5 3 L11.5 7 L5 11Z" fill="#66bb2a"/></svg>
<div class="a t" style="left:1089.00px;top:255.84px;line-height:14px;font-family:'Liberation Sans';font-size:12px;font-weight:normal;white-space:pre;letter-spacing:0.000px;color:#000;transform:scaleX(0.9579);transform-origin:0 0;">CEG-Anfrage</div>
<div class="a" style="left:1067px;top:276px;width:206px;height:26px;background:#fff"></div>
<svg class="a" style="left:1069px;top:281px" width="16" height="14" viewBox="0 0 16 14"><defs><linearGradient id="pg" x1="0" y1="0" x2="0" y2="1"><stop offset="0" stop-color="#e4e4e4"/><stop offset="1" stop-color="#cdcdcd"/></linearGradient></defs><rect x="0.5" y="0.5" width="15" height="13" rx="2" fill="url(#pg)" stroke="#c2c2c2"/><path d="M5 3 L11.5 7 L5 11Z" fill="#66bb2a"/></svg>
<div class="a t" style="left:1089.00px;top:281.84px;line-height:14px;font-family:'Liberation Sans';font-size:12px;font-weight:normal;white-space:pre;letter-spacing:-0.125px;color:#000;">Google Maps</div>
<div class="a" style="left:1067px;top:302px;width:206px;height:26px;background:#f2f2f2"></div>
<svg class="a" style="left:1069px;top:307px" width="16" height="14" viewBox="0 0 16 14"><defs><linearGradient id="pg" x1="0" y1="0" x2="0" y2="1"><stop offset="0" stop-color="#e4e4e4"/><stop offset="1" stop-color="#cdcdcd"/></linearGradient></defs><rect x="0.5" y="0.5" width="15" height="13" rx="2" fill="url(#pg)" stroke="#c2c2c2"/><path d="M5 3 L11.5 7 L5 11Z" fill="#66bb2a"/></svg>
<div class="a t" style="left:1089.00px;top:307.84px;line-height:14px;font-family:'Liberation Sans';font-size:12px;font-weight:normal;white-space:pre;letter-spacing:0.000px;color:#000;transform:scaleX(0.9270);transform-origin:0 0;">SMS senden</div>
<div class="a" style="left:1067px;top:328px;width:206px;height:26px;background:#fff"></div>
<svg class="a" style="left:1069px;top:333px" width="16" height="14" viewBox="0 0 16 14"><defs><linearGradient id="pg" x1="0" y1="0" x2="0" y2="1"><stop offset="0" stop-color="#e4e4e4"/><stop offset="1" stop-color="#cdcdcd"/></linearGradient></defs><rect x="0.5" y="0.5" width="15" height="13" rx="2" fill="url(#pg)" stroke="#c2c2c2"/><path d="M5 3 L11.5 7 L5 11Z" fill="#66bb2a"/></svg>
<div class="a t" style="left:1089.00px;top:333.84px;line-height:14px;font-family:'Liberation Sans';font-size:12px;font-weight:normal;white-space:pre;letter-spacing:0.000px;color:#000;transform:scaleX(0.9254);transform-origin:0 0;">SAP BW zeigen</div>
<div class="a" style="left:1067px;top:354px;width:206px;height:26px;background:#f2f2f2"></div>
<svg class="a" style="left:1069px;top:359px" width="16" height="14" viewBox="0 0 16 14"><defs><linearGradient id="pg" x1="0" y1="0" x2="0" y2="1"><stop offset="0" stop-color="#e4e4e4"/><stop offset="1" stop-color="#cdcdcd"/></linearGradient></defs><rect x="0.5" y="0.5" width="15" height="13" rx="2" fill="url(#pg)" stroke="#c2c2c2"/><path d="M5 3 L11.5 7 L5 11Z" fill="#66bb2a"/></svg>
<div class="a t" style="left:1089.00px;top:359.84px;line-height:14px;font-family:'Liberation Sans';font-size:12px;font-weight:normal;white-space:pre;letter-spacing:0.000px;color:#000;transform:scaleX(0.9191);transform-origin:0 0;">SAP CIC zeigen</div>
<div class="a" style="left:1067px;top:380px;width:206px;height:26px;background:linear-gradient(#dfeaf8,#cfe0f5);border:1px solid #a9c8ed;box-sizing:border-box"></div>
<svg class="a" style="left:1069px;top:385px" width="16" height="14" viewBox="0 0 16 14"><defs><linearGradient id="pg" x1="0" y1="0" x2="0" y2="1"><stop offset="0" stop-color="#e4e4e4"/><stop offset="1" stop-color="#cdcdcd"/></linearGradient></defs><rect x="0.5" y="0.5" width="15" height="13" rx="2" fill="url(#pg)" stroke="#c2c2c2"/><path d="M5 3 L11.5 7 L5 11Z" fill="#66bb2a"/></svg>
<div class="a t" style="left:1089.00px;top:385.84px;line-height:14px;font-family:'Liberation Sans';font-size:12px;font-weight:normal;white-space:pre;letter-spacing:-0.195px;color:#000;">SLP Angebot</div>
<div class="a" style="left:1067px;top:406px;width:206px;height:26px;background:#f2f2f2"></div>
<svg class="a" style="left:1069px;top:412px" width="16" height="13" viewBox="0 0 16 13"><defs><linearGradient id="fg" x1="0" y1="0" x2="0" y2="1"><stop offset="0" stop-color="#e8bd63"/><stop offset="1" stop-color="#c98b1c"/></linearGradient></defs><path d="M0.5 1.5 Q0.5 0.5 1.5 0.5 H5.5 L6.5 1.5 H14.5 Q15.5 1.5 15.5 2.5 V11.5 Q15.5 12.5 14.5 12.5 H1.5 Q0.5 12.5 0.5 11.5Z" fill="url(#fg)"/></svg>
<div class="a t" style="left:1089.00px;top:411.84px;line-height:14px;font-family:'Liberation Sans';font-size:12px;font-weight:normal;white-space:pre;letter-spacing:-0.063px;color:#000;">Umzug</div>
<div class="a" style="left:1067px;top:432px;width:206px;height:26px;background:#fff"></div>
<svg class="a" style="left:1069px;top:437px" width="16" height="14" viewBox="0 0 16 14"><defs><linearGradient id="pg" x1="0" y1="0" x2="0" y2="1"><stop offset="0" stop-color="#e4e4e4"/><stop offset="1" stop-color="#cdcdcd"/></linearGradient></defs><rect x="0.5" y="0.5" width="15" height="13" rx="2" fill="url(#pg)" stroke="#c2c2c2"/><path d="M5 3 L11.5 7 L5 11Z" fill="#66bb2a"/></svg>
<div class="a t" style="left:1089.00px;top:437.84px;line-height:14px;font-family:'Liberation Sans';font-size:12px;font-weight:normal;white-space:pre;letter-spacing:-0.027px;color:#000;">Zählerstandsmeldung</div>
<div class="a" style="left:1067px;top:458px;width:206px;height:26px;background:#f2f2f2"></div>
<svg class="a" style="left:1069px;top:463px" width="16" height="14" viewBox="0 0 16 14"><defs><linearGradient id="pg" x1="0" y1="0" x2="0" y2="1"><stop offset="0" stop-color="#e4e4e4"/><stop offset="1" stop-color="#cdcdcd"/></linearGradient></defs><rect x="0.5" y="0.5" width="15" height="13" rx="2" fill="url(#pg)" stroke="#c2c2c2"/><path d="M5 3 L11.5 7 L5 11Z" fill="#66bb2a"/></svg>
<div class="a t" style="left:1089.00px;top:463.84px;line-height:14px;font-family:'Liberation Sans';font-size:12px;font-weight:normal;white-space:pre;letter-spacing:-0.015px;color:#000;">Zwischenrechnung</div>
<svg class="a" style="left:19px;top:58px" width="16" height="16" viewBox="0 0 16 16"><rect x="8.6" y="1.6" width="7" height="7.6" fill="#f8f8f8" stroke="#d8d8d8" stroke-width="0.4"/><path d="M9.2 7.9 L10.8 7.3 L12 6.3 L13.2 6.7 L15 3.2" stroke="#3aa0e0" stroke-width="0.75" fill="none"/><path d="M0.4 15.2 Q0.1 10 3.5 8.8 L6 8.4 L8.5 8.8 Q11.9 10 11.7 15.2 Q6 16.3 0.4 15.2Z" fill="#3d3d3d"/><path d="M4.7 8.7 L6 11.8 L7.3 8.7Z" fill="#f2f2f2"/><path d="M5.6 9.2 H6.4 L6.7 14.5 L6 15.8 L5.3 14.5Z" fill="#d6b21a"/><circle cx="5" cy="4.8" r="3.8" fill="#f3d063"/><circle cx="5" cy="4.8" r="2.4" fill="#fbe7a0"/><path d="M7 2.2 Q8.8 3 8.4 6" stroke="#9a9a9a" stroke-width="0.8" fill="none"/></svg>
<svg class="a" style="left:100px;top:59px" width="15" height="14" viewBox="0 0 15 14"><defs><linearGradient id="bg1e1e1e" x1="0" x2="1"><stop offset="0" stop-color="#1e1e1e"/><stop offset="0.3" stop-color="#6a6a6a"/><stop offset="0.5" stop-color="#1e1e1e"/><stop offset="0.8" stop-color="#6a6a6a"/><stop offset="1" stop-color="#1e1e1e"/></linearGradient></defs><rect x="2.2" y="0.3" width="3.2" height="3.4" rx="0.6" fill="#1e1e1e"/><rect x="9.6" y="0.3" width="3.2" height="3.4" rx="0.6" fill="#1e1e1e"/><path d="M1.6 3.2h4.6v2.2h2.6V3.2h4.6l1.3 5.6v4.6Q14 13.8 10.6 13.8Q8.6 13.8 8.6 12.8V9.2H6.4v3.6Q6.4 13.8 4.4 13.8Q1 13.8 0.3 13.4V8.8z" fill="url(#bg1e1e1e)"/><rect x="6" y="5.6" width="3" height="2.4" fill="#6a6a6a"/></svg>
<svg class="a" style="left:139px;top:59px" width="14" height="14" viewBox="0 0 14 14"><path d="M0.5 1.5 Q0.5 0.5 1.5 0.5 H12 L13.5 2 V12.5 Q13.5 13.5 12.5 13.5 H1.5 Q0.5 13.5 0.5 12.5Z" fill="#2b2b2b"/><rect x="3" y="0.8" width="7.5" height="4" fill="#cfcfcf"/><rect x="8" y="1.3" width="1.6" height="2.8" fill="#2b2b2b"/><rect x="2.5" y="7.5" width="9" height="5.8" fill="#f2f2f2"/><rect x="2.5" y="11.6" width="9" height="1.7" fill="#3da8e2"/></svg>
<svg class="a" style="left:167.5px;top:59.5px" width="13" height="13" viewBox="0 0 13 13"><defs><linearGradient id="rx" x1="0" y1="0" x2="1" y2="0"><stop offset="0" stop-color="#f0501c"/><stop offset="1" stop-color="#dc1c1c"/></linearGradient></defs><path d="M2.2 2.2L10.8 10.8M10.8 2.2L2.2 10.8" stroke="url(#rx)" stroke-width="3.2" stroke-linecap="round"/></svg>
<svg class="a" style="left:206px;top:59px" width="14" height="14" viewBox="0 0 14 14"><circle cx="7" cy="7" r="6.8" fill="#2f7e21"/><circle cx="7" cy="7" r="5.6" fill="#49a136"/><path d="M2.6 7 L6.8 3.2 V5.4 H11.2 V8.6 H6.8 V10.8Z" fill="#fff"/></svg>
<svg class="a" style="left:244px;top:59px" width="14" height="14" viewBox="0 0 14 14"><circle cx="7" cy="7" r="6.8" fill="#2f7e21"/><circle cx="7" cy="7" r="5.6" fill="#49a136"/><path d="M11.4 7 L7.2 3.2 V5.4 H2.8 V8.6 H7.2 V10.8Z" fill="#fff"/></svg>
<svg class="a" style="left:283px;top:59px" width="14" height="14" viewBox="0 0 14 14"><path d="M2 2L12 12" stroke="#1b1b1b" stroke-width="2.8" stroke-linecap="round"/><path d="M12 2L2 12" stroke="#4a4a4a" stroke-width="2.8" stroke-linecap="round"/></svg>
<svg class="a" style="left:312px;top:59px" width="14" height="14" viewBox="0 0 14 14"><path d="M2 6 Q3 1.5 7.5 1.8 Q10 2 11 4" stroke="#6cbd2c" stroke-width="2.4" fill="none"/><path d="M9 0.5 L13.5 1 L12.5 5.5Z" fill="#6cbd2c"/><path d="M12 8 Q11 12.5 6.5 12.2 Q4 12 3 10" stroke="#8ccf3a" stroke-width="2.4" fill="none"/><path d="M5 13.5 L0.5 13 L1.5 8.5Z" fill="#8ccf3a"/></svg>
<svg class="a" style="left:341px;top:58px" width="16" height="16" viewBox="0 0 16 16"><path d="M1 2 H7 L10 5 V14 H1Z" fill="#e8eaee" stroke="#c2c6cc" stroke-width="0.8"/><path d="M4 0.5 H9.5 L12 3 V10 H4Z" fill="#eef0f3" stroke="#c2c6cc" stroke-width="0.8"/><circle cx="11.5" cy="12" r="3.8" fill="#a9b0b8"/><path d="M11.5 9.8V14.2M9.3 12H13.7" stroke="#fff" stroke-width="1.3"/></svg>
<svg class="a" style="left:380px;top:58px" width="15" height="15" viewBox="0 0 15 15"><rect x="6" y="0.5" width="3" height="6" fill="#666"/><path d="M0.5 8 L7.5 5 L14.5 8 L13 13 L7.5 10 L2 13Z" fill="#8e8a7e"/><path d="M3 9 L7.5 7 L12 9" stroke="#e8e2c8" stroke-width="1.6" fill="none"/></svg>
<svg class="a" style="left:408px;top:59px" width="17" height="14" viewBox="0 0 17 14"><defs><linearGradient id="prn" x1="0" y1="0" x2="0" y2="1"><stop offset="0" stop-color="#b4b4b4"/><stop offset="1" stop-color="#555"/></linearGradient></defs><rect x="4" y="0.5" width="9" height="5" fill="#f4f4f4" stroke="#a0a0a0" stroke-width="0.8"/><path d="M0.5 6 Q0.5 4.5 2 4.5 H15 Q16.5 4.5 16.5 6 V11.5 Q16.5 13 15 13 H2 Q0.5 13 0.5 11.5Z" fill="url(#prn)"/><rect x="2" y="8.2" width="13" height="1.6" fill="#222"/><rect x="3" y="10.5" width="11" height="1" fill="#ddd"/></svg>
<svg class="a" style="left:446px;top:60px" width="16" height="12" viewBox="0 0 16 12"><rect x="0.5" y="0.5" width="15" height="11" rx="1.2" fill="#e4eaf2" stroke="#cfd8e4"/><path d="M2 3 L8 7 L14 3" stroke="#d0d8e2" fill="none"/></svg>
<svg class="a" style="left:488px;top:59px" width="17" height="14" viewBox="0 0 17 14"><path d="M1 3 H6 L8.5 5.5 V13.5 H1Z" fill="#e8eaee" stroke="#c2c6cc" stroke-width="0.8"/><path d="M4 0.5 H9 L11.5 3 V10 H4Z" fill="#eef0f3" stroke="#c2c6cc" stroke-width="0.8"/><circle cx="11.8" cy="10.5" r="3.6" fill="#9ea6af"/><path d="M10 10.5 L11.3 11.8 L13.6 9.3" stroke="#fff" stroke-width="1.1" fill="none"/></svg>
<svg class="a" style="left:568px;top:58px" width="17" height="15" viewBox="0 0 17 15"><rect x="0.5" y="0.5" width="12" height="12" rx="1" fill="#e4e8ee" stroke="#c4cad2"/><path d="M4 3 L9 3 L9 6" stroke="#d0d4da" fill="none"/><path d="M4 8 H10 V5.5 L15.5 9.5 L10 13.5 V11 H4Z" fill="#a8b4c2"/></svg>
<svg class="a" style="left:607px;top:59px" width="16" height="14" viewBox="0 0 16 14"><rect x="0.5" y="0.5" width="3.2" height="13" fill="#c1d0e1"/><path d="M15.5 0.5 V13.5 L4.5 7Z" fill="#c1d0e1"/></svg>
<svg class="a" style="left:637px;top:60px" width="13" height="12" viewBox="0 0 13 12"><path d="M12.5 0 V12 L0.5 6Z" fill="#c1d0e1"/></svg>
<svg class="a" style="left:665px;top:60px" width="13" height="12" viewBox="0 0 13 12"><path d="M0.5 0 V12 L12.5 6Z" fill="#c1d0e1"/></svg>
<svg class="a" style="left:691px;top:59px" width="16" height="14" viewBox="0 0 16 14"><rect x="12.3" y="0.5" width="3.2" height="13" fill="#c1d0e1"/><path d="M0.5 0.5 V13.5 L11.5 7Z" fill="#c1d0e1"/></svg>
<svg class="a" style="left:721px;top:57px" width="14" height="17" viewBox="0 0 14 17"><defs><radialGradient id="glb" cx="0.4" cy="0.4" r="0.6"><stop offset="0" stop-color="#c8f0a0"/><stop offset="0.5" stop-color="#4cb0d8"/><stop offset="1" stop-color="#1c6cb0"/></radialGradient></defs><circle cx="7" cy="5.8" r="5.4" fill="url(#glb)"/><rect x="6.3" y="11" width="1.4" height="2" fill="#888"/><ellipse cx="4" cy="14" rx="3" ry="1.6" fill="none" stroke="#8a8a8a" stroke-width="1.1"/><ellipse cx="10" cy="14" rx="3" ry="1.6" fill="none" stroke="#8a8a8a" stroke-width="1.1"/></svg>
<svg class="a" style="left:911px;top:59px" width="15" height="14" viewBox="0 0 15 14"><defs><linearGradient id="bg1e1e1e" x1="0" x2="1"><stop offset="0" stop-color="#1e1e1e"/><stop offset="0.3" stop-color="#6a6a6a"/><stop offset="0.5" stop-color="#1e1e1e"/><stop offset="0.8" stop-color="#6a6a6a"/><stop offset="1" stop-color="#1e1e1e"/></linearGradient></defs><rect x="2.2" y="0.3" width="3.2" height="3.4" rx="0.6" fill="#1e1e1e"/><rect x="9.6" y="0.3" width="3.2" height="3.4" rx="0.6" fill="#1e1e1e"/><path d="M1.6 3.2h4.6v2.2h2.6V3.2h4.6l1.3 5.6v4.6Q14 13.8 10.6 13.8Q8.6 13.8 8.6 12.8V9.2H6.4v3.6Q6.4 13.8 4.4 13.8Q1 13.8 0.3 13.4V8.8z" fill="url(#bg1e1e1e)"/><rect x="6" y="5.6" width="3" height="2.4" fill="#6a6a6a"/></svg>
<svg class="a" style="left:28px;top:97px" width="32" height="32" viewBox="0 0 16 16"><rect x="8.6" y="1.6" width="7" height="7.6" fill="#f8f8f8" stroke="#d8d8d8" stroke-width="0.4"/><path d="M9.2 7.9 L10.8 7.3 L12 6.3 L13.2 6.7 L15 3.2" stroke="#3aa0e0" stroke-width="0.75" fill="none"/><path d="M0.4 15.2 Q0.1 10 3.5 8.8 L6 8.4 L8.5 8.8 Q11.9 10 11.7 15.2 Q6 16.3 0.4 15.2Z" fill="#3d3d3d"/><path d="M4.7 8.7 L6 11.8 L7.3 8.7Z" fill="#f2f2f2"/><path d="M5.6 9.2 H6.4 L6.7 14.5 L6 15.8 L5.3 14.5Z" fill="#d6b21a"/><ellipse cx="6" cy="5" rx="2.5" ry="3.3" fill="#eaa98c"/><path d="M3.5 4.6 Q3.2 0.9 6 0.9 Q8.8 0.9 8.5 4.6 Q8.2 2.6 6 2.8 Q3.8 2.6 3.5 4.6Z" fill="#8e8e8e"/></svg>
<svg class="a" style="left:1113px;top:106px" width="13" height="13" viewBox="0 0 13 13"><path d="M0 1H13M0 4.4H13M0 7.8H13M0 11.2H13" stroke="#45aee2" stroke-width="1.6"/></svg>
<svg class="a" style="left:1141px;top:104px" width="12" height="16" viewBox="0 0 12 16"><path d="M2.8 7 V4.5 Q2.8 1 6 1 Q9.2 1 9.2 4.5 V7" stroke="#c6ccd4" stroke-width="1.8" fill="none"/><rect x="0.5" y="6.5" width="11" height="9" rx="1.5" fill="#dfe7f1" stroke="#c8d2de" stroke-width="0.8"/></svg>
<svg class="a" style="left:1163px;top:113px" width="5" height="3" viewBox="0 0 5 3"><path d="M0 0 H5 L2.5 3Z" fill="#777"/></svg>
<svg class="a" style="left:1201px;top:113px" width="5" height="3" viewBox="0 0 5 3"><path d="M0 0 H5 L2.5 3Z" fill="#777"/></svg>
<svg class="a" style="left:1178px;top:105px" width="15" height="14" viewBox="0 0 15 14"><defs><linearGradient id="bg6b737c" x1="0" x2="1"><stop offset="0" stop-color="#6b737c"/><stop offset="0.3" stop-color="#a9b0b8"/><stop offset="0.5" stop-color="#6b737c"/><stop offset="0.8" stop-color="#a9b0b8"/><stop offset="1" stop-color="#6b737c"/></linearGradient></defs><rect x="2.2" y="0.3" width="3.2" height="3.4" rx="0.6" fill="#6b737c"/><rect x="9.6" y="0.3" width="3.2" height="3.4" rx="0.6" fill="#6b737c"/><path d="M1.6 3.2h4.6v2.2h2.6V3.2h4.6l1.3 5.6v4.6Q14 13.8 10.6 13.8Q8.6 13.8 8.6 12.8V9.2H6.4v3.6Q6.4 13.8 4.4 13.8Q1 13.8 0.3 13.4V8.8z" fill="url(#bg6b737c)"/><rect x="6" y="5.6" width="3" height="2.4" fill="#a9b0b8"/></svg>
<div class="a" style="left:1209px;top:102px;width:1px;height:23px;background:linear-gradient(#f7f7f7,#6f9fd8 30%,#6f9fd8 70%,#f7f7f7)"></div>
<div class="a" style="left:1238px;top:102px;width:1px;height:23px;background:linear-gradient(#f7f7f7,#6f9fd8 30%,#6f9fd8 70%,#f7f7f7)"></div>
<svg class="a" style="left:1217px;top:105px" width="16" height="16" viewBox="0 0 16 16"><path d="M4.4 15.5 Q4.2 8.600000000000001 8 7.8 Q11.8 8.600000000000001 11.6 15.5Z" fill="#2e2e2e"/><path d="M7.5 8.0 L8.5 8.0 L8.4 12.2 L7.6 12.2Z" fill="#19a59a"/><ellipse cx="8" cy="5.2" rx="1.8" ry="2.3" fill="#d9987a"/><path d="M6.2 5.0 Q6.1 2.6 8 2.7 Q9.9 2.6 9.8 5.0 Q8 3.6 6.2 5.0Z" fill="#9a5a2a"/><path d="M0.10000000000000009 15.5 Q-0.09999999999999964 10.4 3.7 9.6 Q7.5 10.4 7.300000000000001 15.5Z" fill="#2e2e2e"/><path d="M3.2 9.8 L4.2 9.8 L4.1000000000000005 14 L3.3000000000000003 14Z" fill="#19a59a"/><ellipse cx="3.7" cy="7" rx="1.8" ry="2.3" fill="#d9987a"/><path d="M1.9000000000000001 6.8 Q1.8000000000000003 4.4 3.7 4.5 Q5.6 4.4 5.5 6.8 Q3.7 5.4 1.9000000000000001 6.8Z" fill="#9a5a2a"/><path d="M8.700000000000001 15.5 Q8.5 10.4 12.3 9.6 Q16.1 10.4 15.9 15.5Z" fill="#2e2e2e"/><path d="M11.8 9.8 L12.8 9.8 L12.700000000000001 14 L11.9 14Z" fill="#19a59a"/><ellipse cx="12.3" cy="7" rx="1.8" ry="2.3" fill="#d9987a"/><path d="M10.5 6.8 Q10.4 4.4 12.3 4.5 Q14.200000000000001 4.4 14.100000000000001 6.8 Q12.3 5.4 10.5 6.8Z" fill="#9a5a2a"/></svg>
<svg class="a" style="left:1246.5px;top:105.5px" width="13" height="13" viewBox="0 0 13 13"><defs><linearGradient id="rx" x1="0" y1="0" x2="1" y2="0"><stop offset="0" stop-color="#f0501c"/><stop offset="1" stop-color="#dc1c1c"/></linearGradient></defs><path d="M2.2 2.2L10.8 10.8M10.8 2.2L2.2 10.8" stroke="url(#rx)" stroke-width="3.3" stroke-linecap="round"/></svg>
<svg class="a" style="left:10px;top:89px" width="6" height="18" viewBox="0 0 6 18"><path d="M4.2 1 L1.5 3.5 L4.2 6" stroke="#0f2236" stroke-width="1.9" fill="none"/><path d="M2.3 11.5 L5 14 L2.3 16.5" stroke="#0f2236" stroke-width="1.9" fill="none"/></svg>
<svg class="a" style="left:900px;top:156px" width="22" height="22" viewBox="0 0 22 22"><circle cx="13" cy="9" r="5.6" stroke="#3ba6dc" stroke-width="2.6" fill="none"/><circle cx="13" cy="9" r="4" stroke="#8fd0f0" stroke-width="0.6" fill="none"/><path d="M8.6 13.4 L2.6 19.4" stroke="#161616" stroke-width="2.6" stroke-linecap="round"/></svg>
<svg class="a" style="left:931px;top:154px" width="26" height="26" viewBox="0 0 26 26"><path d="M20.5 1.5 L24.5 5.5 L7 23 L3 19Z" fill="#f2c21e"/><path d="M20.5 1.5 L24.5 5.5 L22.8 7.2 L18.8 3.2Z" fill="#d42020"/><path d="M19.2 3.0 L4.6 17.6 L6.2 19.2 L20.8 4.6Z" fill="#1e1e1e"/><path d="M3 19 L7 23 L1.5 24.5Z" fill="#d9b784"/><path d="M1.5 24.5 L3.2 22.8 L2.6 22.2Z" fill="#333"/></svg>
<svg class="a" style="left:964px;top:156px" width="21" height="21" viewBox="0 0 14 14"><path d="M0.5 1.5 Q0.5 0.5 1.5 0.5 H12 L13.5 2 V12.5 Q13.5 13.5 12.5 13.5 H1.5 Q0.5 13.5 0.5 12.5Z" fill="#6f7780"/><rect x="3" y="0.8" width="7.5" height="4" fill="#cfcfcf"/><rect x="8" y="1.3" width="1.6" height="2.8" fill="#6f7780"/><rect x="2.5" y="7.5" width="9" height="5.8" fill="#e8ecf0"/><rect x="2.5" y="11.6" width="9" height="1.7" fill="#c9d0d8"/></svg>
<svg class="a" style="left:992px;top:155px" width="24" height="24" viewBox="0 0 24 24"><circle cx="12" cy="12" r="9.4" stroke="#c6d2e0" stroke-width="3.6" fill="none"/><path d="M5.5 5.5 L18.5 18.5" stroke="#c6d2e0" stroke-width="3.6"/></svg>
<svg class="a" style="left:1026px;top:155px" width="23" height="22" viewBox="0 0 23 22"><defs><linearGradient id="ck" x1="0" y1="1" x2="1" y2="0"><stop offset="0" stop-color="#a6d01c"/><stop offset="1" stop-color="#3f9e2c"/></linearGradient></defs><path d="M1.5 12.5 L5 9.5 L9.5 14 L18.5 1.5 L22 4.5 L10 21Z" fill="url(#ck)" stroke="url(#ck)" stroke-width="1.2" stroke-linejoin="round"/></svg>
<svg class="a" style="left:1058px;top:155px" width="3" height="18" viewBox="0 0 3 18"><path d="M3 0 L0 3 L3 6Z" fill="#0f2236"/><rect x="1.6" y="10.5" width="1.4" height="1.6" fill="#0f2236"/><rect x="1.6" y="14" width="1.4" height="1.6" fill="#0f2236"/></svg>
<svg class="a" style="left:60px;top:253px" width="57" height="72" viewBox="0 0 57 72"><rect x="0" y="0" width="57" height="72" fill="#cdcdcd"/><rect x="2" y="2" width="53" height="69" fill="#f8f8f8"/><path d="M2 72 V59 Q8 57 14 54 Q19 50.5 20 47 Q19.5 42 17.5 38 Q14 33 14 26 Q13.5 17 18 13 Q23 8 29 8 Q36 8 40 13 Q44 18 44.5 24 Q45.5 27 44 29 Q43 35 41 38 Q38 43 38 47 Q39.5 50.5 46 54 Q51 57 55 59 V72Z" fill="#d2d2d2"/><rect x="3.5" y="64" width="7" height="7" fill="none" stroke="#ececec" stroke-width="0.9"/><rect x="8.5" y="60" width="6.5" height="6.5" fill="#d2d2d2" stroke="#ececec" stroke-width="0.9"/><path d="M2.5 63 Q3.5 59.5 6.5 59.5" stroke="#ececec" stroke-width="0.9" fill="none"/></svg>
<svg class="a" style="left:43px;top:515px" width="32" height="32" viewBox="0 0 32 32"><defs><linearGradient id="env" x1="0" y1="0" x2="0" y2="1"><stop offset="0" stop-color="#fbfbfb"/><stop offset="1" stop-color="#e2e2e2"/></linearGradient></defs><rect x="0.5" y="0.5" width="31" height="31" rx="5" fill="url(#env)" stroke="#e4e4e4"/><path d="M1 4 L16 17 L31 4" stroke="#d4d4d4" stroke-width="1" fill="none"/><path d="M1 30 L12 14 M31 30 L20 14" stroke="#e0e0e0" stroke-width="1" fill="none"/></svg>
<svg class="a" style="left:112px;top:515px" width="32" height="32" viewBox="0 0 32 32"><defs><linearGradient id="cal" x1="0" y1="0" x2="0" y2="1"><stop offset="0" stop-color="#fafafa"/><stop offset="1" stop-color="#c8c8c8"/></linearGradient></defs><rect x="0.5" y="0.5" width="31" height="31" rx="5" fill="url(#cal)"/><path d="M0.5 10 V5.5 Q0.5 0.5 5.5 0.5 H26.5 Q31.5 0.5 31.5 5.5 V10Z" fill="#1f7cc4"/><text x="16" y="7.5" font-family="Liberation Sans" font-size="6" font-weight="bold" fill="#e8f2fb" text-anchor="middle">Samstag</text><text x="16" y="27.5" font-family="Liberation Sans" font-size="16" font-weight="bold" fill="#111" stroke="#111" stroke-width="0.4" text-anchor="middle">15</text></svg>
<svg class="a" style="left:181px;top:515px" width="32" height="32" viewBox="0 0 32 32"><defs><linearGradient id="ph" x1="0" y1="0" x2="1" y2="0"><stop offset="0" stop-color="#2a2a2a"/><stop offset="0.5" stop-color="#5a5a5a"/><stop offset="1" stop-color="#2a2a2a"/></linearGradient></defs><rect x="0.5" y="0.5" width="31" height="31" rx="4" fill="url(#ph)" stroke="#222"/><rect x="3" y="2" width="6" height="28" rx="2" fill="#1a1a1a"/><rect x="12" y="4" width="17" height="8" rx="1" fill="#9fb4c4"/><rect x="13" y="15" width="3" height="3" rx="1" fill="#c8c8c8"/><rect x="18" y="15" width="3" height="3" rx="1" fill="#c8c8c8"/><rect x="23" y="15" width="3" height="3" rx="1" fill="#c8c8c8"/><rect x="13" y="20" width="3" height="3" rx="1" fill="#c8c8c8"/><rect x="18" y="20" width="3" height="3" rx="1" fill="#c8c8c8"/><rect x="23" y="20" width="3" height="3" rx="1" fill="#c8c8c8"/><rect x="13" y="25" width="3" height="3" rx="1" fill="#c8c8c8"/><rect x="18" y="25" width="3" height="3" rx="1" fill="#c8c8c8"/><rect x="23" y="25" width="3" height="3" rx="1" fill="#c8c8c8"/></svg>
<svg class="a" style="left:250px;top:515px" width="32" height="32" viewBox="0 0 32 32"><defs><linearGradient id="sms" x1="0" y1="0" x2="0" y2="1"><stop offset="0" stop-color="#8fc88a"/><stop offset="0.45" stop-color="#2f9a1c"/><stop offset="1" stop-color="#6fd41c"/></linearGradient></defs><rect x="0.5" y="0.5" width="31" height="31" rx="5" fill="url(#sms)"/><ellipse cx="16" cy="15" rx="10" ry="6.5" fill="#fff"/><path d="M8 18 L6 24 L13 20Z" fill="#fff"/><text x="16" y="17.5" font-family="Liberation Sans" font-size="7" font-weight="bold" fill="#2f8a1c" text-anchor="middle">SMS</text></svg>
<svg class="a" style="left:318px;top:513px" width="34" height="35" viewBox="0 0 34 35"><defs><radialGradient id="cf" cx="0.6" cy="0.3" r="0.8"><stop offset="0" stop-color="#ffffff"/><stop offset="1" stop-color="#d6d6d6"/></radialGradient></defs><circle cx="13.5" cy="14" r="11.8" fill="#1f8fd6"/><circle cx="13.5" cy="14" r="10.6" fill="none" stroke="#5ab8ee" stroke-width="1"/><circle cx="13.5" cy="14" r="8.3" fill="url(#cf)"/><path d="M13.5 6.5V8M13.5 20V21.5M6 14H7.5M19.5 14H21" stroke="#333" stroke-width="1"/><path d="M13.5 14 L11 7.8" stroke="#333" stroke-width="1"/><path d="M13.5 14 L18 8.5" stroke="#e02020" stroke-width="0.8"/><path d="M13.5 14 L17 17" stroke="#333" stroke-width="0.8"/><circle cx="13.5" cy="14" r="1.5" fill="#1f8fd6"/><rect x="15.5" y="16.5" width="17" height="17" rx="2" fill="#f4f4f4" stroke="#dcdcdc" stroke-width="0.6"/><path d="M15.5 21.5 V18.5 Q15.5 16.5 17.5 16.5 H30.5 Q32.5 16.5 32.5 18.5 V21.5Z" fill="#8cc21c"/><text x="24" y="31.5" font-family="Liberation Sans" font-size="9.5" font-weight="bold" fill="#111" text-anchor="middle">15</text></svg>
<svg class="a" style="left:78px;top:548px" width="12" height="7" viewBox="0 0 12 7"><path d="M0 0 H12 L6 7Z" fill="#2f8ad2"/></svg>
<svg class="a" style="left:147px;top:548px" width="12" height="7" viewBox="0 0 12 7"><path d="M0 0 H12 L6 7Z" fill="#2f8ad2"/></svg>
<svg class="a" style="left:216px;top:548px" width="12" height="7" viewBox="0 0 12 7"><path d="M0 0 H12 L6 7Z" fill="#2f8ad2"/></svg>
<svg class="a" style="left:285px;top:548px" width="12" height="7" viewBox="0 0 12 7"><path d="M0 0 H12 L6 7Z" fill="#2f8ad2"/></svg>
<svg class="a" style="left:353px;top:548px" width="12" height="7" viewBox="0 0 12 7"><path d="M0 0 H12 L6 7Z" fill="#2f8ad2"/></svg>
<div class="a" style="left:93px;top:506px;width:1px;height:52px;background:#e6e6e6"></div>
<div class="a" style="left:162px;top:506px;width:1px;height:52px;background:#e6e6e6"></div>
<div class="a" style="left:231px;top:506px;width:1px;height:52px;background:#e6e6e6"></div>
<div class="a" style="left:300px;top:506px;width:1px;height:52px;background:#e6e6e6"></div>
<svg class="a" style="left:33px;top:605px" width="10" height="10" viewBox="0 0 10 10"><rect x="0.5" y="0.5" width="9" height="9" rx="2" fill="#fff" stroke="#5b92d8"/><path d="M2.5 5 H7.5" stroke="#3a78c8" stroke-width="1.2"/></svg>
<svg class="a" style="left:53px;top:623px" width="10" height="10" viewBox="0 0 10 10"><rect x="0.5" y="0.5" width="9" height="9" rx="2" fill="#fff" stroke="#5b92d8"/><path d="M2.5 5 H7.5" stroke="#3a78c8" stroke-width="1.2"/></svg>
<svg class="a" style="left:73px;top:641px" width="10" height="10" viewBox="0 0 10 10"><rect x="0.5" y="0.5" width="9" height="9" rx="2" fill="#fff" stroke="#5b92d8"/><path d="M2.5 5 H7.5" stroke="#3a78c8" stroke-width="1.2"/></svg>
<svg class="a" style="left:93px;top:677px" width="10" height="10" viewBox="0 0 10 10"><rect x="0.5" y="0.5" width="9" height="9" rx="2" fill="#fff" stroke="#5b92d8"/><path d="M2.5 5 H7.5" stroke="#3a78c8" stroke-width="1.2"/></svg>
<svg class="a" style="left:113px;top:695px" width="10" height="10" viewBox="0 0 10 10"><rect x="0.5" y="0.5" width="9" height="9" rx="2" fill="#fff" stroke="#5b92d8"/><path d="M2.5 5 H7.5" stroke="#3a78c8" stroke-width="1.2"/></svg>
<svg class="a" style="left:50px;top:601px" width="16" height="16" viewBox="0 0 16 16"><rect x="8.6" y="1.6" width="7" height="7.6" fill="#f8f8f8" stroke="#d8d8d8" stroke-width="0.4"/><path d="M9.2 7.9 L10.8 7.3 L12 6.3 L13.2 6.7 L15 3.2" stroke="#3aa0e0" stroke-width="0.75" fill="none"/><path d="M0.4 15.2 Q0.1 10 3.5 8.8 L6 8.4 L8.5 8.8 Q11.9 10 11.7 15.2 Q6 16.3 0.4 15.2Z" fill="#3d3d3d"/><path d="M4.7 8.7 L6 11.8 L7.3 8.7Z" fill="#f2f2f2"/><path d="M5.6 9.2 H6.4 L6.7 14.5 L6 15.8 L5.3 14.5Z" fill="#d6b21a"/><ellipse cx="6" cy="5" rx="2.5" ry="3.3" fill="#eaa98c"/><path d="M3.5 4.6 Q3.2 0.9 6 0.9 Q8.8 0.9 8.5 4.6 Q8.2 2.6 6 2.8 Q3.8 2.6 3.5 4.6Z" fill="#8e8e8e"/></svg>
<svg class="a" style="left:71px;top:619px" width="16" height="16" viewBox="0 0 16 16"><rect x="0.8" y="0.8" width="13" height="13" rx="2" fill="#f0ede8" stroke="#a85a22" stroke-width="1.6"/><path d="M3.5 3.8 H10 M6.75 3.8 V11" stroke="#666" stroke-width="1.6"/><rect x="8" y="8" width="7.5" height="7.5" fill="#fff"/><path d="M9 15 L15 9" stroke="#2a78c8" stroke-width="1.8"/><path d="M8.8 9.5 H12" stroke="#9ccfe8" stroke-width="1.5"/></svg>
<svg class="a" style="left:90px;top:637px" width="16" height="15" viewBox="0 0 16 15"><path d="M1 7.5 L8 1 L15 7.5" stroke="#d52020" stroke-width="2" fill="none"/><path d="M3.5 7 L8 3 L12.5 7 V15 H3.5Z" fill="#f4f4f4" stroke="#ddd" stroke-width="0.5"/><rect x="6.5" y="10" width="3" height="5" fill="#c87a2a"/><circle cx="8" cy="7" r="0.9" fill="#777"/></svg>
<svg class="a" style="left:112px;top:655px" width="15" height="16" viewBox="0 0 15 16"><path d="M0.8 0.8 H10 L13 3.8 V15.2 H0.8Z" fill="#f6f6f6" stroke="#a8a8a8" stroke-width="0.8"/><rect x="2" y="3" width="9" height="1.5" fill="#5ab4e4"/><path d="M2 6.5 H11 M2 9 H9 M2 11.5 H8 M2 14 H11" stroke="#d0d0d0" stroke-width="0.6"/><path d="M5 13.5 L13.5 5" stroke="#2a70c8" stroke-width="1.8"/><path d="M13.5 5 L14.5 4" stroke="#888" stroke-width="1.8"/></svg>
<svg class="a" style="left:112px;top:673px" width="15" height="16" viewBox="0 0 15 16"><path d="M0.8 0.8 H10 L13 3.8 V15.2 H0.8Z" fill="#f6f6f6" stroke="#a8a8a8" stroke-width="0.8"/><rect x="2" y="3" width="9" height="1.5" fill="#5ab4e4"/><path d="M2 6.5 H11 M2 9 H9 M2 11.5 H8 M2 14 H11" stroke="#d0d0d0" stroke-width="0.6"/><path d="M5 13.5 L13.5 5" stroke="#2a70c8" stroke-width="1.8"/><path d="M13.5 5 L14.5 4" stroke="#888" stroke-width="1.8"/></svg>
<svg class="a" style="left:112px;top:745px" width="15" height="16" viewBox="0 0 15 16"><path d="M0.8 0.8 H10 L13 3.8 V15.2 H0.8Z" fill="#f6f6f6" stroke="#a8a8a8" stroke-width="0.8"/><rect x="2" y="3" width="9" height="1.5" fill="#5ab4e4"/><path d="M2 6.5 H11 M2 9 H9 M2 11.5 H8 M2 14 H11" stroke="#d0d0d0" stroke-width="0.6"/><path d="M5 13.5 L13.5 5" stroke="#2a70c8" stroke-width="1.8"/><path d="M13.5 5 L14.5 4" stroke="#888" stroke-width="1.8"/></svg>
<svg class="a" style="left:131px;top:691px" width="15" height="16" viewBox="0 0 15 16"><rect x="7" y="0.5" width="1.6" height="5" fill="#999"/><rect x="10" y="0.5" width="1.6" height="5" fill="#999"/><rect x="0.5" y="5" width="14" height="10" fill="#dcdcdc"/><rect x="0.5" y="8" width="14" height="1.5" fill="#8aa4bc"/><rect x="8" y="11" width="6.5" height="1.5" fill="#8aa4bc"/><rect x="1.5" y="10.5" width="5" height="4.5" fill="#555"/></svg>
<svg class="a" style="left:153px;top:709px" width="10" height="16" viewBox="0 0 10 16"><circle cx="5" cy="5" r="4" fill="#f2f2f2" stroke="#9a9a9a" stroke-width="0.9"/><path d="M3.5 3.5 L6 6" stroke="#777" stroke-width="0.7"/><path d="M5 9 V15.5" stroke="#a0a0a0" stroke-width="1.2"/></svg>
<svg class="a" style="left:151px;top:727px" width="15" height="15" viewBox="0 0 15 15"><rect x="0.5" y="0.5" width="14" height="14" rx="1.5" fill="#404040" stroke="#2a2a2a"/><rect x="3" y="3" width="9" height="9" fill="#e8e8e8"/><rect x="3" y="3" width="9" height="3" fill="#4a4a4a"/><path d="M4 8 H11 M4 10 H11" stroke="#999" stroke-width="0.6"/><circle cx="10.5" cy="4" r="0.8" fill="#d02020"/></svg>
<div class="a" style="left:10px;top:443px;width:4px;height:4px;background:#4a6584;border-radius:2px"></div>
<div class="a" style="left:1058px;top:470px;width:4px;height:4px;background:#4a6584;border-radius:2px"></div>
<div class="a" style="left:629px;top:825px;width:4px;height:4px;background:#4a6584;border-radius:2px"></div>
<div class="a" style="left:10px;top:450px;width:4px;height:4px;background:#4a6584;border-radius:2px"></div>
<div class="a" style="left:1058px;top:477px;width:4px;height:4px;background:#4a6584;border-radius:2px"></div>
<div class="a" style="left:636px;top:825px;width:4px;height:4px;background:#4a6584;border-radius:2px"></div>
<div class="a" style="left:10px;top:457px;width:4px;height:4px;background:#4a6584;border-radius:2px"></div>
<div class="a" style="left:1058px;top:484px;width:4px;height:4px;background:#4a6584;border-radius:2px"></div>
<div class="a" style="left:643px;top:825px;width:4px;height:4px;background:#4a6584;border-radius:2px"></div>
<div class="a" style="left:10px;top:464px;width:4px;height:4px;background:#4a6584;border-radius:2px"></div>
<div class="a" style="left:1058px;top:491px;width:4px;height:4px;background:#4a6584;border-radius:2px"></div>
<div class="a" style="left:650px;top:825px;width:4px;height:4px;background:#4a6584;border-radius:2px"></div>
<div class="a" style="left:10px;top:471px;width:4px;height:4px;background:#4a6584;border-radius:2px"></div>
<div class="a" style="left:1058px;top:498px;width:4px;height:4px;background:#4a6584;border-radius:2px"></div>
<div class="a" style="left:657px;top:825px;width:4px;height:4px;background:#4a6584;border-radius:2px"></div>
<svg class="a" style="left:24px;top:823px" width="20" height="9" viewBox="0 0 20 9"><path d="M1 4.5 L3.5 2 L6 4.5" stroke="#0f2236" stroke-width="1.8" fill="none"/><path d="M14 4 L16.5 6.5 L19 4" stroke="#0f2236" stroke-width="1.8" fill="none"/></svg>
</body></html>
